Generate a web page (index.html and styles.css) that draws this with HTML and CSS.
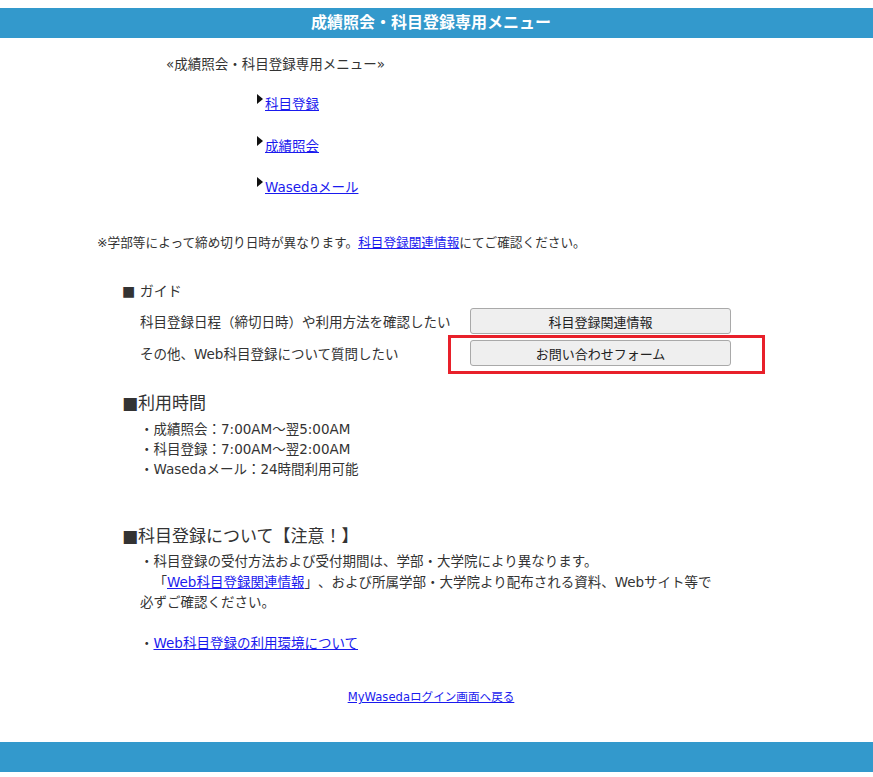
FILE: index.html
```html
<!DOCTYPE html>
<html lang="ja">
<head>
    <meta charset="UTF-8">
    <title>成績照会・科目登録専用メニュー</title>
    <link rel="stylesheet" href="styles.css">
</head>
<body>
    <div class="top-bar">成績照会・科目登録専用メニュー</div>

    <p class="menu-title">«成績照会・科目登録専用メニュー»</p>

    <ul class="menu-links">
        <li><span class="arrow"></span><a href="#">科目登録</a></li>
        <li><span class="arrow"></span><a href="#">成績照会</a></li>
        <li><span class="arrow"></span><a href="#">Wasedaメール</a></li>
    </ul>

    <p class="note">※学部等によって締め切り日時が異なります。<a href="#">科目登録関連情報</a>にてご確認ください。</p>

    <div class="guide">
        <h3>■ ガイド</h3>
        <div class="guide-rows">
            <span>科目登録日程（締切日時）や利用方法を確認したい</span>
            <div class="btn-wrap"><button class="btn">科目登録関連情報</button></div>
            <span>その他、Web科目登録について質問したい</span>
            <div class="btn-wrap">
                <button class="btn">お問い合わせフォーム</button>
                <div class="red-box"></div>
            </div>
        </div>
    </div>

    <div class="section hours">
        <h3>■利用時間</h3>
        <ul>
            <li>・成績照会：7:00AM〜翌5:00AM</li>
            <li>・科目登録：7:00AM〜翌2:00AM</li>
            <li>・Wasedaメール：24時間利用可能</li>
        </ul>
    </div>

    <div class="section caution">
        <h3>■科目登録について【注意！】</h3>
        <p>・科目登録の受付方法および受付期間は、学部・大学院により異なります。<br>　「<a href="#">Web科目登録関連情報</a>」、および所属学部・大学院より配布される資料、Webサイト等で<br>必ずご確認ください。<br><br>・<a href="#">Web科目登録の利用環境について</a></p>
    </div>

    <p class="back"><a href="#">MyWasedaログイン画面へ戻る</a></p>

    <div class="bottom-bar"></div>
</body>
</html>
```

FILE: styles.css
```css
body {
    margin: 0;
    font-family: "DejaVu Sans", "Noto Sans CJK JP", sans-serif;
    font-size: 13.5px;
    color: #333;
    background: #fff;
    text-spacing-trim: space-all;
}

a {
    color: #1a1aee;
}

.top-bar {
    margin-top: 8px;
    height: 30px;
    line-height: 30px;
    padding-right: 11px;
    background: #3399cc;
    color: #fff;
    font-size: 16px;
    font-weight: bold;
    text-align: center;
}

.menu-title {
    margin: 16px 0 0 166px;
    line-height: 20px;
}

.menu-links {
    list-style: none;
    margin: 20px 0 0;
    padding-left: 257px;
}

.menu-links li {
    line-height: 20px;
    margin-bottom: 21.5px;
}

.menu-links li:last-child {
    margin-bottom: 0;
}

.arrow {
    display: inline-block;
    width: 0;
    height: 0;
    border-left: 6px solid #111;
    border-top: 5px solid transparent;
    border-bottom: 5px solid transparent;
    margin-right: 2px;
    vertical-align: 5px;
}

.note {
    margin: 36px 0 0 97px;
    font-size: 12.65px;
    line-height: 20px;
}

.guide {
    margin: 28px 0 0 122px;
}

.guide h3 {
    margin: 0;
    font-size: 14px;
    font-weight: normal;
    line-height: 20px;
}

.guide-rows {
    display: grid;
    grid-template-columns: 330px 261px;
    row-gap: 6px;
    align-items: center;
    margin-top: 7px;
    padding-left: 18px;
}

.btn-wrap {
    position: relative;
}

.btn {
    display: block;
    width: 261px;
    height: 26px;
    background: #efefef;
    border: 1px solid #a9a9a9;
    border-radius: 3px;
    font-family: inherit;
    font-size: 13px;
    color: #222;
}

.red-box {
    position: absolute;
    left: -22px;
    top: -5px;
    right: -34px;
    bottom: -8px;
    border: 3px solid #e8202a;
}

.section {
    margin-left: 122px;
}

.section h3 {
    margin: 0;
    font-size: 17px;
    font-weight: normal;
    line-height: 24px;
}

.hours {
    margin-top: 25px;
}

.hours ul {
    list-style: none;
    margin: 4px 0 0;
    padding-left: 18px;
    line-height: 20px;
}

.caution {
    margin-top: 45px;
}

.caution p {
    margin: 3px 0 0 18px;
    line-height: 20.5px;
}

.back {
    margin: 33.5px 0 0;
    padding-right: 11px;
    text-align: center;
    font-size: 11.6px;
    line-height: 20px;
}

.bottom-bar {
    margin-top: 35px;
    height: 30px;
    background: #3399cc;
}
```
